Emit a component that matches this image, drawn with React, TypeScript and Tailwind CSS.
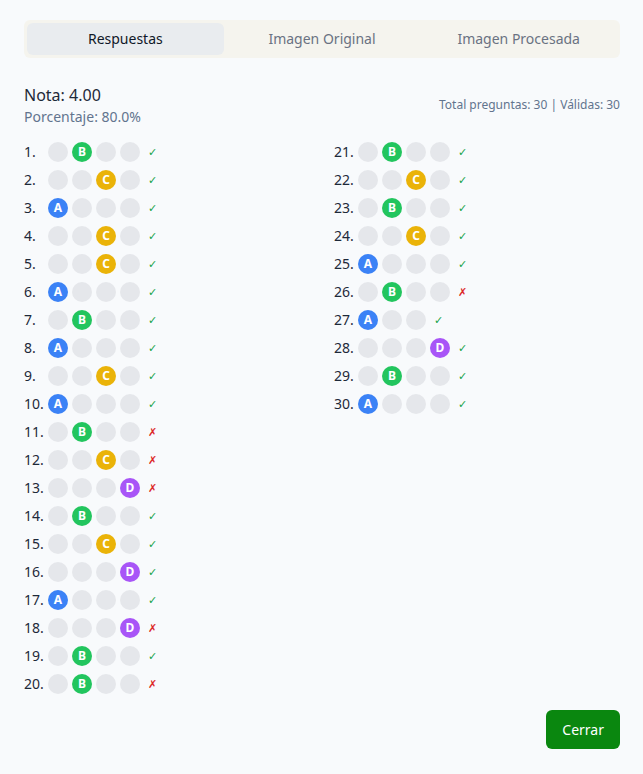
import React, { useState } from 'react';

type Answer = { n: number; pick: number; opts: number; ok: boolean };

const letters = ['A', 'B', 'C', 'D'];

const pickColors = ['bg-[#3b82f6]', 'bg-[#22c55e]', 'bg-[#eab308]', 'bg-[#a855f7]'];

// pick index per question (0=A .. 3=D), and whether it counts as correct
const raw: [number, boolean][] = [
  [1, true], [2, true], [0, true], [2, true], [2, true],
  [0, true], [1, true], [0, true], [2, true], [0, true],
  [1, false], [2, false], [3, false], [1, true], [2, true],
  [3, true], [0, true], [3, false], [1, true], [1, false],
  [1, true], [2, true], [1, true], [2, true], [0, true],
  [1, false], [0, true], [3, true], [1, true], [0, true],
];

const answers: Answer[] = raw.map(([pick, ok], i) => ({
  n: i + 1,
  pick,
  ok,
  opts: i + 1 === 27 ? 3 : 4,
}));

const tabs = ['Respuestas', 'Imagen Original', 'Imagen Procesada'];

const Row: React.FC<{ a: Answer }> = ({ a }) => (
  <div className="flex items-center h-5">
    <span className="w-6 text-sm text-gray-800 leading-5">{a.n}.</span>
    <div className="flex gap-1">
      {Array.from({ length: a.opts }).map((_, i) =>
        i === a.pick ? (
          <div
            key={i}
            className={`w-5 h-5 rounded-full flex items-center justify-center text-white text-xs font-bold ${pickColors[i]}`}
          >
            {letters[i]}
          </div>
        ) : (
          <div key={i} className="w-5 h-5 rounded-full bg-[#e5e7eb]" />
        )
      )}
    </div>
    {a.ok ? (
      <span className="ml-2 text-[11px] text-[#16a34a]">✓</span>
    ) : (
      <span className="ml-2 text-[11px] text-[#dc2626]">✗</span>
    )}
  </div>
);

export default function App() {
  const [tab, setTab] = useState(0);
  const left = answers.slice(0, 20);
  const right = answers.slice(20);

  return (
    <div
      className="min-h-[774px] bg-[#f8fafc] pl-6 pr-[23px] pt-5 pb-6 flex flex-col"
      style={{ fontFamily: '"Noto Sans", sans-serif' }}
    >
      {/* Tabs */}
      <div className="flex h-[38px] p-[3px] rounded-md bg-[#f5f4ee]">
        {tabs.map((t, i) => (
          <button
            key={t}
            onClick={() => setTab(i)}
            className={`flex-1 rounded-md text-sm ${
              tab === i ? 'bg-[#e9ecef] text-gray-900' : 'text-gray-500'
            }`}
          >
            {t}
          </button>
        ))}
      </div>

      {/* Summary */}
      <div className="mt-[25px] flex items-center justify-between">
        <div>
          <div className="text-base text-gray-800 leading-6">Nota: 4.00</div>
          <div className="text-sm text-slate-500 leading-5">Porcentaje: 80.0%</div>
        </div>
        <div className="text-xs text-slate-500">Total preguntas: 30 | Válidas: 30</div>
      </div>

      {/* Answer grid */}
      <div className="mt-[15px] grid grid-cols-2 gap-x-6">
        <div className="flex flex-col gap-2">
          {left.map((a) => (
            <Row key={a.n} a={a} />
          ))}
        </div>
        <div className="flex flex-col gap-2">
          {right.map((a) => (
            <Row key={a.n} a={a} />
          ))}
        </div>
      </div>

      <div className="mt-4 flex justify-end">
        <button className="h-[39px] px-4 rounded-md bg-[#0a870f] text-white text-sm">
          Cerrar
        </button>
      </div>
    </div>
  );
}
